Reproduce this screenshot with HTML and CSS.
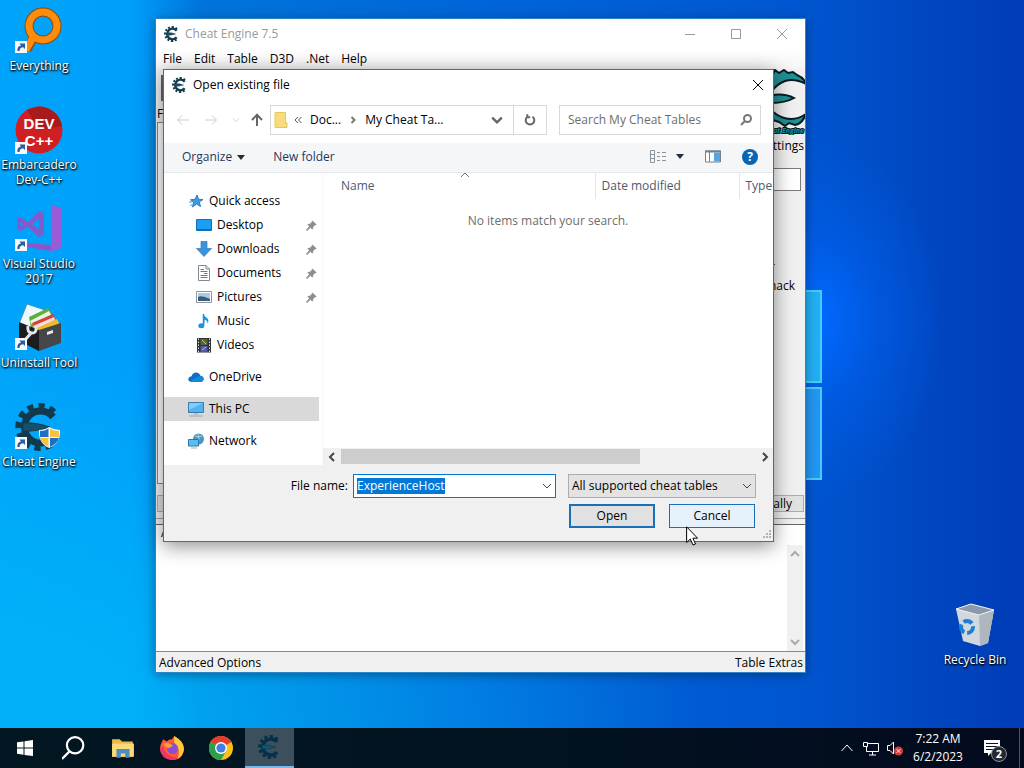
FILE: index.html
```
<!DOCTYPE html>
<html lang="en">
<head>
    <meta charset="UTF-8">
    <meta name="viewport" content="width=device-width, initial-scale=1.0">
    <title>Desktop</title>
    <link rel="stylesheet" href="styles.css">
</head>
<body>

    <!-- Shared symbols -->
    <svg class="defs" aria-hidden="true">
        <symbol id="gear" viewBox="0 0 48 48">
            <path class="teeth" d="M39 9 A21 21 0 1 0 39 39" fill="none" stroke-width="6" stroke-dasharray="6 5"/>
            <path class="ring" d="M38 14 A16 16 0 1 0 38 34" fill="none" stroke-width="7"/>
            <path class="spike" d="M8 20 Q20 19 35 24 Q20 29 8 28Z"/>
        </symbol>
        <symbol id="shortcut" viewBox="0 0 12 12">
            <rect width="12" height="12" fill="#f6f8fb"/>
            <path d="M2.500 10 C2 6.500 4 4.500 6 4.400 L4.500 2.500 H10 V8 L8.200 6.300 C6 6.500 4.500 7.500 4.600 10Z" fill="#2c5b9e"/>
        </symbol>
        <symbol id="pin" viewBox="0 0 12 12">
            <path d="M7 1 L11 5 L9.500 5.500 L7.500 7.500 L7 10 L5 8 L1 11.500 L.5 11 L4 7 L2 5 L4.500 4.500 L6.500 2.500Z" fill="#8a8f94" stroke="#8a8f94"/>
        </symbol>
        <symbol id="chevron" viewBox="0 0 10 10">
            <path d="M1 3 L5 7 L9 3" fill="none" stroke="currentColor"/>
        </symbol>
    </svg>

    <main class="desktop">
        <div class="logo-glow"><span></span><span></span></div>

        <!-- Desktop shortcuts -->
        <div class="shortcuts">
            <a class="shortcut" href="#">
                <svg viewBox="0 0 48 48">
                    <path d="M20 27 L12 43" stroke="#8a4b10" stroke-width="9"/>
                    <circle cx="28" cy="19" r="14" fill="none" stroke="#8a4b10" stroke-width="9"/>
                    <path d="M20 27 L11 43" stroke="#ff8c0a" stroke-width="7"/>
                    <circle cx="28" cy="19" r="14" fill="none" stroke="#ff8c0a" stroke-width="7"/>
                    <use href="#shortcut" x="0" y="34" width="12" height="12"/>
                </svg>
                <span>Everything</span>
            </a>
            <a class="shortcut" href="#">
                <svg viewBox="0 0 48 48">
                    <circle cx="24" cy="24" r="23.500" fill="#d01f22"/>
                    <path d="M24 .5 A23.500 23.500 0 0 1 47 20 L24 24 L12 4Z" fill="#a91a1c"/>
                    <text x="24" y="23" class="dev-text">DEV</text>
                    <text x="24" y="40" class="dev-text">C++</text>
                    <use href="#shortcut" x="0" y="36" width="12" height="12"/>
                </svg>
                <span>Embarcadero<br>Dev-C++</span>
            </a>
            <a class="shortcut" href="#">
                <svg viewBox="0 0 48 48">
                    <path d="M36 0 L46 3 V43 L36 46 L13 42 V38 L36 40Z" fill="#8f55c8"/>
                    <path d="M36 0 L46 3 V43 L36 46Z" fill="#9a5bd6"/>
                    <path d="M2 13 L5 12 L13 17 L24 6 L29 8 V30 L24 32 L13 22 L5 26 L2 25Z M5 17 V21 L8 19Z M17 19 L24 24 V14Z" fill="#7f5bcd" fill-rule="evenodd"/>
                    <use href="#shortcut" x="0" y="34" width="12" height="12"/>
                </svg>
                <span>Visual Studio<br>2017</span>
            </a>
            <a class="shortcut" href="#">
                <svg viewBox="0 0 48 48">
                    <path d="M12 0 L30 6 L20 26 L4 20Z" fill="#eef8fd" stroke="#3b9bc0"/>
                    <path d="M14 13 L33 4 L36 8 V20 L16 24Z" fill="#5fae3c"/>
                    <path d="M15 17 L34 7 L36 11 L17 21Z" fill="#eaf6e4"/>
                    <path d="M17 19 L38 10 L40 14 V22 L19 26Z" fill="#d5413b"/>
                    <path d="M18 22 L39 13 L40 16 L20 26Z" fill="#f7dcd8"/>
                    <path d="M20 25 L42 15 L44 19 V26 L22 30Z" fill="#eebb2e"/>
                    <path d="M4 18 L24 26 V47 L4 37Z" fill="#1c1d20"/>
                    <path d="M24 26 L46 19 V39 L24 47Z" fill="#45464a"/>
                    <path d="M32 28 L38 26 V29 L32 31Z" fill="#e9e9e9"/>
                    <path d="M10 36 L17 28 M13 22 Q12 29 17 29 Q22 29 21 23" fill="none" stroke="#e2e4e6" stroke-width="3"/>
                    <use href="#shortcut" x="0" y="34" width="12" height="12"/>
                </svg>
                <span>Uninstall Tool</span>
            </a>
            <a class="shortcut" href="#">
                <svg viewBox="0 0 48 48">
                    <use href="#gear" class="gear-dark" width="48" height="48"/>
                    <path d="M24 27 Q30 27 34 24 Q39 27 45 27 Q46 40 34 45 Q23 40 24 27Z" fill="#f5f7f8"/>
                    <path d="M25 28 Q30 28 33.500 25.500 V34 H25Z M35 35 H44 Q42 41 35 44Z" fill="#1f6fc9"/>
                    <path d="M35 25.500 Q39 28 44 28 V34 H35Z M25 35 H33.500 V44 Q27 41 25 35Z" fill="#f7c33c"/>
                    <use href="#shortcut" x="0" y="34" width="12" height="12"/>
                </svg>
                <span>Cheat Engine</span>
            </a>
        </div>

        <a class="shortcut recycle" href="#">
            <svg viewBox="0 0 48 48">
                <path d="M5 8 L20 3 L43 9 L37 42 L29 45 L12 40Z" fill="#d3d8de"/>
                <path d="M28 14 L43 9 L37 42 L29 45Z" fill="#aeb6c0"/>
                <path d="M5 8 L20 3 L43 9 L28 14Z" fill="#8d98a8" stroke="#eef2f6"/>
                <circle cx="16" cy="26" r="6" fill="none" stroke="#1e7fd2" stroke-width="4" stroke-dasharray="9 3"/>
            </svg>
            <span>Recycle Bin</span>
        </a>

        <!-- Main window -->
        <section class="window main-window">
            <header class="titlebar">
                <svg class="app-icon gear-dark"><use href="#gear"/></svg>
                <h1>Cheat Engine 7.5</h1>
                <div class="caption-buttons">
                    <button aria-label="Minimize"><svg viewBox="0 0 12 12"><path d="M1 6.500 H11"/></svg></button>
                    <button aria-label="Maximize"><svg viewBox="0 0 12 12"><path d="M1.500 1.500 H10.500 V10.500 H1.500Z"/></svg></button>
                    <button aria-label="Close"><svg viewBox="0 0 12 12"><path d="M1 1 L11 11 M11 1 L1 11"/></svg></button>
                </div>
            </header>
            <nav class="menubar">
                <button>File</button>
                <button>Edit</button>
                <button>Table</button>
                <button>D3D</button>
                <button>.Net</button>
                <button>Help</button>
            </nav>
            <div class="scan-panel">
                <div class="found">
                    <div class="tool-icon"></div>
                    <p>Found:0</p>
                    <div class="found-list"></div>
                </div>
                <div class="options">
                    <svg class="ce-logo" viewBox="0 0 66 66">
                        <path d="M22 5 L34 5 L36 1 L40 4 L45 1 L49 4 L54 3 L58 6 Q65 9 67 15 Q56 9 46 12 Q38 15 33 22 V26 Q46 24 55 29 Q46 34 33 34 V42 Q42 50 52 50 Q60 50 67 45 Q63 55 56 56 L50 54 L46 57 L40 53 L24 48 Q8 30 22 5Z" fill="#218f96" stroke="#061c20" stroke-width="2"/>
                        <text x="65" y="64">Cheat Engine</text>
                    </svg>
                    <p>Settings</p>
                    <input class="value-box" type="text" aria-label="Value">
                    <p class="opt">Unrandomizer</p>
                    <p class="opt">Enable Speedhack</p>
                </div>
            </div>
            <div class="panel-actions">
                <button>Memory View</button>
                <button>Manually</button>
            </div>
            <div class="splitter"></div>
            <div class="cheat-list">
                <p>Active &nbsp; Description</p>
                <div class="vscroll">
                    <svg class="up"><use href="#chevron"/></svg>
                    <svg><use href="#chevron"/></svg>
                </div>
            </div>
            <footer class="statusbar">
                <button>Advanced Options</button>
                <button>Table Extras</button>
            </footer>
        </section>

        <!-- Open file dialog -->
        <section class="window dialog" role="dialog" aria-label="Open existing file">
            <header class="titlebar">
                <svg class="app-icon gear-dark"><use href="#gear"/></svg>
                <h2>Open existing file</h2>
                <div class="caption-buttons">
                    <button aria-label="Close"><svg viewBox="0 0 12 12"><path d="M1 1 L11 11 M11 1 L1 11"/></svg></button>
                </div>
            </header>

            <div class="navrow">
                <div class="arrows">
                    <button class="off" aria-label="Back"><svg viewBox="0 0 14 14"><path d="M13 7 H2 M6 2.500 L1.500 7 L6 11.500"/></svg></button>
                    <button class="off" aria-label="Forward"><svg viewBox="0 0 14 14"><path d="M1 7 H12 M8 2.500 L12.500 7 L8 11.500"/></svg></button>
                    <button class="off small" aria-label="Recent"><svg viewBox="0 0 10 10"><use href="#chevron"/></svg></button>
                    <button class="up-btn" aria-label="Up"><svg viewBox="0 0 14 14"><path d="M7 13 V2 M2 7 L7 1.800 L12 7"/></svg></button>
                </div>
                <div class="address">
                    <svg class="folder" viewBox="0 0 14 16"><path d="M1 0 H12 V10 H13 V16 H1Z" fill="#f8dc7c"/><path d="M1 .5 H11.500 V11 L13 11 V15.500 H1Z" fill="none" stroke="#e8c65c"/></svg>
                    <svg class="sep" viewBox="0 0 8 8"><path d="M4 1 L1 4 L4 7 M7.500 1 L4.500 4 L7.500 7"/></svg>
                    <span class="crumb">Doc...</span>
                    <svg class="sep thick" viewBox="0 0 8 8"><path d="M2.500 1 L5.500 4 L2.500 7"/></svg>
                    <span class="crumb last">My Cheat Ta...</span>
                    <button class="drop" aria-label="Previous locations"><svg viewBox="0 0 10 10"><use href="#chevron"/></svg></button>
                    <button class="refresh" aria-label="Refresh"><svg viewBox="0 0 12 12"><path d="M8.500 2.800 A4.300 4.300 0 1 1 3.500 2.800 M3.300 .2 V3.200 H6.200"/></svg></button>
                </div>
                <label class="search">
                    <input type="text" placeholder="Search My Cheat Tables" aria-label="Search My Cheat Tables">
                    <svg viewBox="0 0 12 12"><circle cx="7.500" cy="4.500" r="3.500"/><path d="M5 7 L1 11"/></svg>
                </label>
            </div>

            <div class="toolbar">
                <button class="organize">Organize <i class="tri"></i></button>
                <button>New folder</button>
                <div class="tools">
                    <button aria-label="Change your view" class="view">
                        <svg viewBox="0 0 16 13"><path d="M.5 .5 H4.500 V12.500 H.5Z M1 4.500 H4 M1 8.500 H4 M7 2.500 H10 M12 2.500 H16 M7 6.500 H10 M12 6.500 H16 M7 10.500 H10 M12 10.500 H16" fill="none" stroke="#8a949c"/></svg>
                        <i class="tri"></i>
                    </button>
                    <button aria-label="Preview pane">
                        <svg viewBox="0 0 16 12"><path d="M.5 .5 H15.500 V11.500 H.5Z M4.500 1 V11" fill="#fff" stroke="#70808c"/><path d="M0 1 H16" stroke="#70808c" stroke-width="2"/><path d="M9 2 H15 V11 H9Z" fill="#5ba3dd"/></svg>
                    </button>
                    <button aria-label="Help" class="help">?</button>
                </div>
            </div>

            <div class="browser">
                <ul class="tree">
                    <li>
                        <svg viewBox="0 0 16 16"><path d="M9 2 L10.500 6.300 L15 6.500 L11.300 9 L12.500 13.500 L8.600 11 L4.500 14 L5.500 9.300 L2.500 6.800 L7 6.300Z" fill="#3d9be3" stroke="#2a7fc4"/><path d="M1 9 H4 M2 12 H4" stroke="#3d9be3"/></svg>
                        <a href="#">Quick access</a>
                    </li>
                    <li class="sub">
                        <svg viewBox="0 0 16 16"><path d="M.5 2.500 H15.500 V13.500 H.5Z" fill="#1a9df2" stroke="#1371b8"/><path d="M1 12.500 H15" stroke="#0d66b0"/></svg>
                        <a href="#">Desktop</a>
                        <svg class="pin"><use href="#pin"/></svg>
                    </li>
                    <li class="sub">
                        <svg viewBox="0 0 16 16"><path d="M5 .5 H11 V7.500 H15.500 L8 15.500 L.5 7.500 H5Z" fill="#3a93dc" stroke="#3178b8" stroke-width=".7"/></svg>
                        <a href="#">Downloads</a>
                        <svg class="pin"><use href="#pin"/></svg>
                    </li>
                    <li class="sub">
                        <svg viewBox="0 0 16 16"><path d="M2.500 .5 H10 L13.500 4 V15.500 H2.500Z" fill="#fff" stroke="#7d8a92"/><path d="M10 .5 V4 H13.500" fill="none" stroke="#7d8a92"/><path d="M4.500 4.500 H8 M4.500 6.500 H11.500 M8 8.500 H11.500 M4.500 10.500 H11.500 M4.500 12.500 H11.500" stroke="#3d8da6"/></svg>
                        <a href="#">Documents</a>
                        <svg class="pin"><use href="#pin"/></svg>
                    </li>
                    <li class="sub">
                        <svg viewBox="0 0 16 16"><path d="M.5 2.500 H15.500 V13.500 H.5Z" fill="#fff" stroke="#8b9298"/><path d="M2 4 H14 V12 H2Z" fill="#a9cbe8"/><path d="M2 8 Q6 6 14 10 V12 H2Z" fill="#3c5b78"/></svg>
                        <a href="#">Pictures</a>
                        <svg class="pin"><use href="#pin"/></svg>
                    </li>
                    <li class="sub">
                        <svg viewBox="0 0 16 16"><path d="M7 .5 Q8 3.500 11 5 Q13.500 7 11.500 11 Q12 7.500 8.500 6.500 V12.500" fill="#1b93dc"/><path d="M7.500 1 V12" stroke="#1b93dc" stroke-width="1.500"/><ellipse cx="5.300" cy="12.800" rx="3" ry="2.500" fill="#1b93dc"/></svg>
                        <a href="#">Music</a>
                    </li>
                    <li class="sub">
                        <svg viewBox="0 0 16 16"><path d="M1 1 H15 V15.500 H1Z" fill="#2f3236"/><path d="M2.500 1.500 V15 M13.500 1.500 V15" stroke="#d8dcdf" stroke-dasharray="1.500 1.500"/><path d="M4.500 2 H11.500 V8 H4.500Z" fill="#54683e"/><path d="M4.500 9 H11.500 V15 H4.500Z" fill="#5257b8"/><path d="M6 3 L10 7 M6 13 L10 10" stroke="#d9c35b"/></svg>
                        <a href="#">Videos</a>
                    </li>
                    <li class="root">
                        <svg viewBox="0 0 16 16"><path d="M3.500 13 Q0 12.500 .3 9.800 Q.8 7.200 3.500 7.200 Q5 3.200 8.500 3.500 Q11.500 3.800 12.500 6.800 Q16 7.500 15.700 10.500 Q15 13 12.500 13Z" fill="#0f6fc4"/><path d="M2 12 L9 8 Q13 6 15 8.500 Q16.500 12 12.500 13 H3.500Z" fill="#1787d8"/></svg>
                        <a href="#">OneDrive</a>
                    </li>
                    <li class="root selected">
                        <svg viewBox="0 0 16 16"><path d="M.5 1.500 H15.500 V11.500 H.5Z" fill="#4fb3f2" stroke="#3a7ba8"/><path d="M1 2 H15 L1 9Z" fill="#83cdf8"/><path d="M6 13 H10 M1 15 H15" stroke="#9aa7b0"/></svg>
                        <a href="#">This PC</a>
                    </li>
                    <li class="root">
                        <svg viewBox="0 0 16 16"><circle cx="10.500" cy="6" r="5.500" fill="#4a97bb"/><path d="M7 3 Q10 5 14 3 M10 1 Q12 5 10 11" fill="none" stroke="#a7d6e8"/><path d="M.5 6.500 H10.500 V13 H.5Z" fill="#5cbdf0" stroke="#2f76a4"/><path d="M3 15 H9" stroke="#8fb3c8"/></svg>
                        <a href="#">Network</a>
                    </li>
                </ul>
                <div class="files">
                    <table>
                        <thead>
                            <tr>
                                <th class="name">Name<svg><use href="#chevron"/></svg></th>
                                <th class="date">Date modified</th>
                                <th>Type</th>
                            </tr>
                        </thead>
                    </table>
                    <p class="empty">No items match your search.</p>
                    <div class="hscroll">
                        <svg class="left"><use href="#chevron"/></svg>
                        <div class="track"><div class="thumb"></div></div>
                        <svg class="right"><use href="#chevron"/></svg>
                    </div>
                </div>
            </div>

            <form class="dialog-footer">
                <div class="fields">
                    <label for="filename">File name:</label>
                    <div class="combo">
                        <input id="filename" type="text" value="ExperienceHost">
                        <svg><use href="#chevron"/></svg>
                    </div>
                    <div class="filetype">
                        <select aria-label="File type">
                            <option>All supported cheat tables</option>
                        </select>
                        <svg><use href="#chevron"/></svg>
                    </div>
                </div>
                <div class="actions">
                    <button type="button" class="btn default">Open</button>
                    <button type="button" class="btn hover">Cancel</button>
                </div>
                <svg class="grip" viewBox="0 0 9 9"><path d="M7 1 H9 M4 4 H6 M7 4 H9 M1 7 H3 M4 7 H6 M7 7 H9" stroke="#b4b4b4" stroke-width="2"/></svg>
            </form>
        </section>

        <svg class="cursor" viewBox="0 0 12 20"><path d="M.6 .8 V16.500 L4.300 13 L7 19 L9.500 18 L6.900 12.200 H11.600Z" fill="#fff" stroke="#000"/></svg>
    </main>

    <footer class="taskbar">
        <div class="apps">
            <button aria-label="Start"><svg viewBox="0 0 16 16"><path d="M0 2.300 L6.500 1.400 V7.600 H0Z M7.500 1.200 L16 0 V7.600 H7.500Z M0 8.500 H6.500 V14.700 L0 13.800Z M7.500 8.500 H16 V16 L7.500 14.900Z" fill="#fff"/></svg></button>
            <button aria-label="Search" class="lg"><svg viewBox="0 0 22 22"><circle cx="12" cy="8.500" r="7.500" fill="none" stroke="#fff" stroke-width="2"/><path d="M7 14 L0 21" stroke="#fff" stroke-width="2.200"/></svg></button>
            <button aria-label="File Explorer" class="lg"><svg viewBox="0 0 22 22"><path d="M1 3 H8 L10 5 H20 V19 H1Z" fill="#e9b949"/><path d="M1 7 H21 V19 H1Z" fill="#fbd978"/><path d="M5 12 H17 V20 H13 V16 H9 V20 H5Z" fill="#4a8fc4"/></svg></button>
            <button aria-label="Firefox" class="lg"><svg viewBox="0 0 22 22"><path d="M2 5 L3 3 L6 5 Q8 3 11 3 L13 0 Q22 5 22 12 Q21 22 11 22 Q1 21 0 12 Q0 8 2 5Z" fill="#ff5a36"/><path d="M13 0 Q22 5 22 12 Q21 19 16 21 Q20 12 13 6Z" fill="#ffc93a"/><path d="M0 12 Q1 21 11 22 Q15 22 17 20 Q5 20 3 9Z" fill="#f0336b"/><circle cx="11.500" cy="11.500" r="5" fill="#8a4fd0"/><path d="M3 7 Q8 5 12 9 L8 11 Q5 11 3 7Z" fill="#ff9a3a"/></svg></button>
            <button aria-label="Chrome" class="lg"><svg viewBox="0 0 24 24"><circle cx="12" cy="12" r="12" fill="#fbc116"/><path d="M12 12 L1.600 6 A12 12 0 0 1 22.400 6Z" fill="#e33b2e"/><path d="M1.600 6 A12 12 0 0 0 12 24 L17.200 15 L12 12Z" fill="#2da04e"/><circle cx="12" cy="12" r="6" fill="#fff"/><circle cx="12" cy="12" r="4.600" fill="#3e7fe8"/></svg></button>
            <button aria-label="Cheat Engine" class="lg active"><svg class="gear-task"><use href="#gear"/></svg></button>
        </div>
        <div class="tray">
            <button aria-label="Show hidden icons"><svg viewBox="0 0 16 16"><path d="M2.500 11 L8 5 L13.500 11"/></svg></button>
            <button aria-label="Network"><svg viewBox="0 0 16 16"><path d="M5 3.500 H15.500 V11.500 H3.500 V7 M6 15 H13 M9.500 12 V15 M.5 2.500 H4.500 V6.500 H.5Z"/></svg></button>
            <button aria-label="Volume muted"><svg viewBox="0 0 16 16"><path d="M.5 5.500 H3 L6.500 2 V14 L3 10.500 H.5Z"/><circle cx="11.500" cy="11" r="4.500" fill="#d63a3a" stroke="none"/><path d="M9.700 9.200 L13.300 12.800 M13.300 9.200 L9.700 12.800"/></svg></button>
            <time class="clock" datetime="2023-06-02T07:22">7:22 AM<br>6/2/2023</time>
            <button aria-label="Notifications" class="notes">
                <svg viewBox="0 0 18 18"><path d="M1 1 H17 V14 H8 L5 17 V14 H1Z" fill="#fff" stroke="none"/><path d="M3 4.500 H15 M3 7.500 H15 M3 10.500 H11" stroke="#0a1322"/></svg>
                <span class="badge">2</span>
            </button>
        </div>
    </footer>

    <script>
        // Start with the file name selected, like the native dialog does
        var filename = document.getElementById("filename");
        filename.focus();
        filename.select();
    </script>

</body>
</html>
```
FILE: styles.css
```
* {
    box-sizing: border-box;
}

html, body {
    margin: 0;
    height: 100%;
    overflow: hidden;
}

body {
    display: flex;
    flex-direction: column;
    font-family: "Open Sans", "Noto Sans", sans-serif;
    font-size: 12px;
    line-height: 16px;
    color: #000;
}

p, h1, h2, ul {
    margin: 0;
    padding: 0;
    font-size: 12px;
    font-weight: normal;
}

button, input, select {
    font: inherit;
    color: inherit;
    margin: 0;
    padding: 0;
    border: none;
    background: none;
}

button {
    white-space: nowrap;
}

a {
    color: inherit;
    text-decoration: none;
}

.defs {
    position: absolute;
    width: 0;
    height: 0;
}

/* Wallpaper */
.desktop {
    position: relative;
    flex: 1;
    overflow: hidden;
    background:
        radial-gradient(ellipse 130px 180px at 815px 320px, #0069ff 0%, rgba(0, 96, 240, 0.5) 50%, transparent 100%),
        radial-gradient(ellipse 700px 380px at 0 100%, rgba(0, 180, 248, 0.8) 20%, transparent 100%),
        linear-gradient(90deg, #00a4fb 0, #009ffa 130px, #0074da 200px, #0064d8 500px, #0056d0 800px, #003cb6 100%);
}

.logo-glow {
    position: absolute;
    left: 640px;
    top: 290px;
    width: 182px;
    display: grid;
    gap: 4px;
}

.logo-glow span {
    height: 93px;
    background: #22aef2;
    border: 2px solid #45ccfb;
}

.logo-glow span + span {
    background: #2296f2;
}

/* Shortcuts */
.shortcuts {
    display: grid;
    grid-auto-rows: 99px;
    width: 78px;
    padding-top: 7px;
}

.shortcut {
    display: flex;
    flex-direction: column;
    align-items: center;
    gap: 3px;
    color: #fff;
    text-align: center;
    line-height: 15px;
    white-space: nowrap;
    text-shadow: 1px 1px 2px #000, 0 1px 2px #000;
}

.shortcut svg {
    width: 48px;
    height: 48px;
    flex: none;
}

.dev-text {
    font: bold 15px "Liberation Sans", sans-serif;
    fill: #fff;
    text-anchor: middle;
    text-shadow: none;
}

.recycle {
    position: absolute;
    right: 10px;
    top: 601px;
    width: 78px;
}

.gear-dark {
    stroke: #123a4c;
    fill: #17506a;
}

.gear-task {
    stroke: #06304a;
    fill: #0d5876;
}

/* Windows */
.window {
    position: absolute;
    display: flex;
    flex-direction: column;
    background: #f0f0f0;
}

.main-window {
    left: 155px;
    top: 18px;
    width: 651px;
    height: 655px;
    border: 1px solid #2a86c8;
    box-shadow: 0 2px 10px rgba(0, 0, 0, 0.35);
}

.titlebar {
    display: flex;
    align-items: center;
    flex: none;
    height: 30px;
    padding-left: 8px;
    gap: 5px;
    background: #fff;
}

.main-window .titlebar {
    color: #999;
}

.app-icon {
    width: 16px;
    height: 16px;
}

.caption-buttons {
    display: flex;
    margin-left: auto;
}

.caption-buttons button {
    display: flex;
    align-items: center;
    justify-content: center;
    width: 46px;
    height: 28px;
}

.caption-buttons svg {
    width: 12px;
    height: 12px;
    fill: none;
    stroke: currentColor;
}

.menubar {
    display: flex;
    flex: none;
    gap: 12px;
    height: 20px;
    padding-left: 7px;
    background: linear-gradient(#fff, #f4f4f4);
}

.scan-panel {
    display: flex;
    justify-content: space-between;
    height: 415px;
}

.found {
    display: flex;
    flex-direction: column;
    width: 400px;
    padding: 6px 0 0 1px;
}

.tool-icon {
    width: 24px;
    height: 26px;
    margin: 0 0 5px 4px;
    background: #e1e1e1;
    border: 2px solid #666;
}

.found-list {
    flex: 1;
    background: #fff;
    border: 1px solid #828790;
}

.options {
    display: flex;
    flex-direction: column;
    align-items: flex-end;
    padding-right: 1px;
}

.ce-logo {
    width: 66px;
    height: 66px;
    margin: 0 -1px 3px 0;
}

.ce-logo text {
    font: italic bold 7px "Open Sans", sans-serif;
    text-anchor: end;
    fill: #1a9a9f;
    stroke: #061c20;
    stroke-width: 2px;
    paint-order: stroke;
}

.value-box {
    width: 180px;
    height: 23px;
    margin: 14px 3px 68px 0;
    background: #fff;
    border: 1px solid #7a7a7a;
}

.opt {
    margin-right: 9px;
    padding-bottom: 3px;
}

.opt:nth-of-type(2) {
    margin-right: 29px;
}

.panel-actions {
    display: flex;
    justify-content: space-between;
    padding: 11px 1px 6px;
}

.panel-actions button {
    height: 17px;
    padding: 0 11px;
    line-height: 14px;
    background: #e1e1e1;
    border: 1px solid #adadad;
}

.splitter {
    height: 7px;
    border-top: 1px solid #a0a0a0;
    border-bottom: 1px solid #646464;
}

.cheat-list {
    display: flex;
    justify-content: space-between;
    flex: 1;
    padding: 0 2px 0 5px;
    background: #fff;
    border-bottom: 1px solid #828790;
}

.vscroll {
    display: flex;
    flex-direction: column;
    justify-content: space-between;
    align-items: center;
    width: 16px;
    margin-top: 20px;
    padding: 4px 0;
    background: #f0f0f0;
    color: #aaa;
}

.vscroll svg {
    width: 10px;
    height: 10px;
    stroke-width: 2px;
}

.vscroll .up {
    transform: rotate(180deg);
}

.statusbar {
    display: flex;
    justify-content: space-between;
    align-items: center;
    flex: none;
    height: 20px;
    padding: 2px 2px 0 3px;
}

/* Dialog */
.dialog {
    left: 163px;
    top: 69px;
    width: 611px;
    height: 473px;
    border: 1px solid #666;
    box-shadow: 0 4px 18px rgba(0, 0, 0, 0.45);
}

.dialog .caption-buttons button {
    width: 30px;
}

.navrow {
    display: flex;
    gap: 12px;
    flex: none;
    padding: 5px 12px 8px;
    background: #fff;
}

.arrows {
    display: flex;
    align-items: center;
    gap: 14px;
    margin-right: -6px;
    color: #666;
}

.arrows button {
    display: flex;
}

.arrows svg {
    width: 14px;
    height: 14px;
    fill: none;
    stroke: currentColor;
    stroke-width: 1px;
}

.arrows .small {
    margin-right: -4px;
}

.arrows .small svg {
    width: 8px;
    height: 8px;
}

.arrows .up-btn svg {
    stroke-width: 2px;
}

.arrows .off {
    color: #ccc;
}

.address {
    display: flex;
    align-items: center;
    flex: 1;
    height: 30px;
    padding-left: 3px;
    border: 1px solid #d9d9d9;
}

.folder {
    width: 14px;
    height: 16px;
    margin-right: 6px;
}

.sep {
    width: 8px;
    height: 8px;
    fill: none;
    stroke: #555;
}

.sep.thick {
    stroke: #777;
    stroke-width: 2px;
}

.crumb {
    padding: 0 8px;
}

.address button {
    display: flex;
    align-items: center;
    justify-content: center;
    width: 32px;
    height: 28px;
    color: #666;
}

.address .drop {
    margin-left: auto;
}

.address .refresh {
    width: 33px;
    border-left: 1px solid #d9d9d9;
}

.address button svg {
    width: 12px;
    height: 12px;
    fill: none;
    stroke: currentColor;
    stroke-width: 2px;
}

.search {
    display: flex;
    align-items: center;
    width: 202px;
    height: 30px;
    padding: 0 8px;
    border: 1px solid #d9d9d9;
}

.search input {
    flex: 1;
    min-width: 0;
}

.search input::placeholder {
    color: #6d6d6d;
}

.search svg {
    width: 12px;
    height: 12px;
    fill: none;
    stroke: #777;
    stroke-width: 2px;
}

.toolbar {
    display: flex;
    align-items: center;
    gap: 28px;
    flex: none;
    height: 30px;
    padding: 0 15px 2px 18px;
    background: #f5f6f7;
    border-bottom: 1px solid #e4e8ec;
    color: #1e395b;
}

.tri {
    display: inline-block;
    border: 4px solid transparent;
    border-top: 5px solid #1f2f3f;
    border-bottom: 0;
    margin-left: 2px;
    vertical-align: middle;
}

.tools {
    display: flex;
    align-items: center;
    gap: 21px;
    margin-left: auto;
}

.tools button {
    display: flex;
    align-items: center;
}

.tools svg {
    width: 16px;
    height: 13px;
}

.tools .tri {
    margin-left: 10px;
}

.tools .help {
    justify-content: center;
    width: 16px;
    height: 16px;
    border-radius: 50%;
    background: #0a64b4;
    color: #fff;
    font-weight: bold;
}

.browser {
    display: flex;
    flex: 1;
    min-height: 0;
    background: #fff;
}

.tree {
    width: 159px;
    flex: none;
    padding: 16px 3px 0 0;
    border-right: 1px solid #f8f8f8;
    list-style: none;
}

.tree li {
    display: flex;
    align-items: center;
    gap: 5px;
    height: 24px;
    padding: 0 2px 0 24px;
}

.tree .sub {
    padding-left: 32px;
}

.tree .root {
    margin-top: 8px;
}

.tree .selected {
    background: #d9d9d9;
}

.tree svg {
    width: 16px;
    height: 16px;
    flex: none;
}

.tree .pin {
    width: 11px;
    height: 11px;
    margin-left: auto;
}

.files {
    display: flex;
    flex-direction: column;
    flex: 1;
    min-width: 0;
    overflow: hidden;
}

.files table {
    table-layout: fixed;
    width: 100%;
    border-collapse: collapse;
    color: #4c5a70;
}

.files th {
    height: 26px;
    padding: 0 0 0 6px;
    font-weight: normal;
    text-align: left;
    border-left: 1px solid #e5e5e5;
}

.files .name {
    position: relative;
    width: 272px;
    padding-left: 18px;
    border-left: none;
}

/* Sort arrow sits on the header's top edge */
.files .name svg {
    position: absolute;
    top: -3px;
    left: 137px;
    width: 10px;
    height: 10px;
    transform: rotate(180deg);
    color: #777;
}

.files .date {
    width: 144px;
}

.empty {
    flex: 1;
    padding-top: 14px;
    text-align: center;
    color: #6d6d6d;
}

.hscroll {
    display: flex;
    align-items: center;
    height: 17px;
    padding: 0 3px 0 4px;
    gap: 4px;
    background: #f0f0f0;
    color: #444;
}

.hscroll svg {
    width: 10px;
    height: 10px;
    stroke-width: 2px;
}

.hscroll .left {
    transform: rotate(90deg);
}

.hscroll .right {
    transform: rotate(-90deg);
}

.track {
    flex: 1;
    height: 100%;
}

.thumb {
    width: 72%;
    height: 15px;
    margin-top: 1px;
    background: #cdcdcd;
}

.dialog-footer {
    position: relative;
    display: flex;
    flex-direction: column;
    gap: 6px;
    height: 76px;
    padding: 9px 17px 0 0;
}

.fields, .actions {
    display: flex;
    justify-content: flex-end;
    align-items: center;
}

.combo, .filetype {
    display: flex;
    align-items: center;
    height: 24px;
    border: 1px solid #0078d7;
    background: #fff;
}

.combo {
    width: 203px;
    margin: 0 12px 0 5px;
    padding: 0 3px;
}

.combo input {
    flex: 1;
    min-width: 0;
    height: 16px;
    outline: none;
}

.combo input::selection {
    background: #0078d7;
    color: #fff;
}

.combo svg, .filetype svg {
    width: 10px;
    height: 10px;
    color: #444;
}

.filetype {
    position: relative;
    width: 188px;
    background: #e3e3e3;
    border-color: #adadad;
}

.filetype select {
    width: 100%;
    height: 22px;
    padding-left: 3px;
    appearance: none;
}

/* Arrow lies over the select */
.filetype svg {
    position: absolute;
    right: 3px;
    pointer-events: none;
}

.actions {
    gap: 14px;
    padding-right: 1px;
}

.btn {
    width: 86px;
    height: 24px;
    background: #e1e1e1;
    border: 2px solid #1a70b8;
}

.btn.hover {
    background: #e5f1fb;
    border-width: 1px;
}

.grip {
    position: absolute;
    right: 2px;
    bottom: 2px;
    width: 9px;
    height: 9px;
}

.cursor {
    position: absolute;
    left: 686px;
    top: 526px;
    width: 12px;
    height: 20px;
}

/* Taskbar */
.taskbar {
    display: flex;
    justify-content: space-between;
    flex: none;
    height: 40px;
    background: linear-gradient(90deg, #021722, #021320 50%, #030a1e);
    color: #fff;
}

.apps, .tray {
    display: flex;
}

.apps button {
    display: flex;
    align-items: center;
    justify-content: center;
    width: 49px;
}

.apps svg {
    width: 16px;
    height: 16px;
}

.apps .lg svg {
    width: 24px;
    height: 24px;
}

.apps .active {
    background: #3c4f5c;
    border-bottom: 2px solid #76b9ed;
}

.tray {
    align-items: center;
    gap: 8px;
    padding-right: 4px;
}

.tray button {
    display: flex;
}

.tray svg {
    width: 16px;
    height: 16px;
    fill: none;
    stroke: #fff;
    stroke-width: 1px;
}

.clock {
    width: 54px;
    text-align: center;
    line-height: 18px;
}

.tray .notes {
    position: relative;
    align-items: center;
    height: 40px;
    padding: 0 18px 0 10px;
    border-right: 1px solid #4b5361;
}

.tray .notes svg {
    width: 18px;
    height: 18px;
}

.badge {
    position: absolute;
    left: 18px;
    top: 18px;
    width: 16px;
    height: 16px;
    border: 1px solid #8b9099;
    border-radius: 50%;
    background: #23272f;
    font-size: 11px;
    font-weight: bold;
    line-height: 14px;
    text-align: center;
}
```
